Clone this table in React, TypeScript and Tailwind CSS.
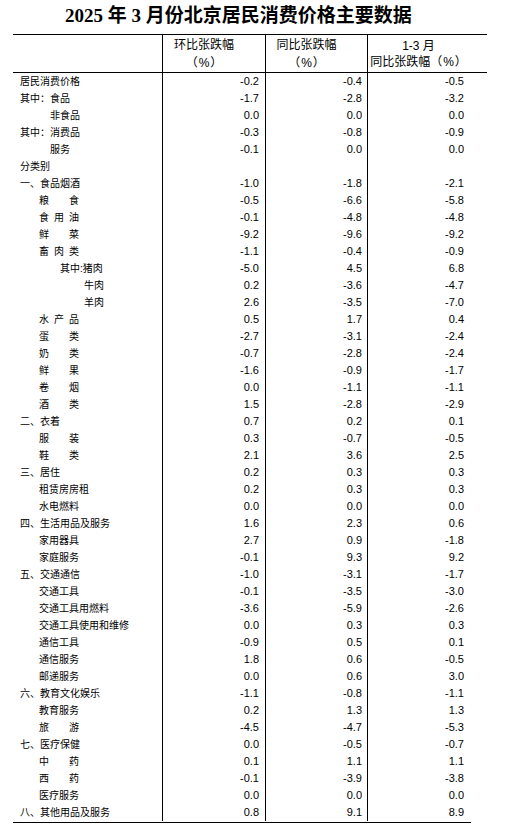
import React from 'react'

type Level = 0 | 1 | 2 | 3 | 4

interface Row {
  label: string
  level: Level
  spread?: boolean
  values?: [string, string, string]
}

const rows: Row[] = [
  { label: '居民消费价格', level: 0, values: ['-0.2', '-0.4', '-0.5'] },
  { label: '其中：食品', level: 0, values: ['-1.7', '-2.8', '-3.2'] },
  { label: '非食品', level: 2, values: ['0.0', '0.0', '0.0'] },
  { label: '其中：消费品', level: 0, values: ['-0.3', '-0.8', '-0.9'] },
  { label: '服务', level: 2, values: ['-0.1', '0.0', '0.0'] },
  { label: '分类别', level: 0 },
  { label: '一、食品烟酒', level: 0, values: ['-1.0', '-1.8', '-2.1'] },
  { label: '粮食', level: 1, spread: true, values: ['-0.5', '-6.6', '-5.8'] },
  { label: '食用油', level: 1, spread: true, values: ['-0.1', '-4.8', '-4.8'] },
  { label: '鲜菜', level: 1, spread: true, values: ['-9.2', '-9.6', '-9.2'] },
  { label: '畜肉类', level: 1, spread: true, values: ['-1.1', '-0.4', '-0.9'] },
  { label: '其中:猪肉', level: 3, values: ['-5.0', '4.5', '6.8'] },
  { label: '牛肉', level: 4, values: ['0.2', '-3.6', '-4.7'] },
  { label: '羊肉', level: 4, values: ['2.6', '-3.5', '-7.0'] },
  { label: '水产品', level: 1, spread: true, values: ['0.5', '1.7', '0.4'] },
  { label: '蛋类', level: 1, spread: true, values: ['-2.7', '-3.1', '-2.4'] },
  { label: '奶类', level: 1, spread: true, values: ['-0.7', '-2.8', '-2.4'] },
  { label: '鲜果', level: 1, spread: true, values: ['-1.6', '-0.9', '-1.7'] },
  { label: '卷烟', level: 1, spread: true, values: ['0.0', '-1.1', '-1.1'] },
  { label: '酒类', level: 1, spread: true, values: ['1.5', '-2.8', '-2.9'] },
  { label: '二、衣着', level: 0, values: ['0.7', '0.2', '0.1'] },
  { label: '服装', level: 1, spread: true, values: ['0.3', '-0.7', '-0.5'] },
  { label: '鞋类', level: 1, spread: true, values: ['2.1', '3.6', '2.5'] },
  { label: '三、居住', level: 0, values: ['0.2', '0.3', '0.3'] },
  { label: '租赁房房租', level: 1, values: ['0.2', '0.3', '0.3'] },
  { label: '水电燃料', level: 1, values: ['0.0', '0.0', '0.0'] },
  { label: '四、生活用品及服务', level: 0, values: ['1.6', '2.3', '0.6'] },
  { label: '家用器具', level: 1, values: ['2.7', '0.9', '-1.8'] },
  { label: '家庭服务', level: 1, values: ['-0.1', '9.3', '9.2'] },
  { label: '五、交通通信', level: 0, values: ['-1.0', '-3.1', '-1.7'] },
  { label: '交通工具', level: 1, values: ['-0.1', '-3.5', '-3.0'] },
  { label: '交通工具用燃料', level: 1, values: ['-3.6', '-5.9', '-2.6'] },
  { label: '交通工具使用和维修', level: 1, values: ['0.0', '0.3', '0.3'] },
  { label: '通信工具', level: 1, values: ['-0.9', '0.5', '0.1'] },
  { label: '通信服务', level: 1, values: ['1.8', '0.6', '-0.5'] },
  { label: '邮递服务', level: 1, values: ['0.0', '0.6', '3.0'] },
  { label: '六、教育文化娱乐', level: 0, values: ['-1.1', '-0.8', '-1.1'] },
  { label: '教育服务', level: 1, values: ['0.2', '1.3', '1.3'] },
  { label: '旅游', level: 1, spread: true, values: ['-4.5', '-4.7', '-5.3'] },
  { label: '七、医疗保健', level: 0, values: ['0.0', '-0.5', '-0.7'] },
  { label: '中药', level: 1, spread: true, values: ['0.1', '1.1', '1.1'] },
  { label: '西药', level: 1, spread: true, values: ['-0.1', '-3.9', '-3.8'] },
  { label: '医疗服务', level: 1, values: ['0.0', '0.0', '0.0'] },
  { label: '八、其他用品及服务', level: 0, values: ['0.8', '9.1', '8.9'] },
]

const indent: Record<Level, string> = {
  0: 'pl-[7px]',
  1: 'pl-[26px]',
  2: 'pl-[37px]',
  3: 'pl-[47px]',
  4: 'pl-[71px]',
}

function Label({ row }: { row: Row }) {
  if (row.spread) {
    return (
      <div className="flex w-[40px] justify-between">
        {row.label.split('').map((ch, i) => (
          <span key={i}>{ch}</span>
        ))}
      </div>
    )
  }
  return <span className="whitespace-nowrap">{row.label}</span>
}

function DataRow({ row }: { row: Row }) {
  const v = row.values ?? ['', '', '']
  return (
    <div className="flex h-[17px] items-center">
      <div
        className={`flex h-full w-[150px] items-center border-r border-black text-[10px] ${indent[row.level]}`}
      >
        <Label row={row} />
      </div>
      <div className="flex h-full w-[103px] items-center justify-end border-r border-black pr-[6px]">
        {v[0]}
      </div>
      <div className="flex h-full w-[102px] items-center justify-end border-r border-black pr-[5px]">
        {v[1]}
      </div>
      <div className="flex h-full w-[103px] items-center justify-end pr-[7px]">{v[2]}</div>
    </div>
  )
}

// full-width parens get trimmed to half width, so give them a full cell each
function Pct() {
  return (
    <span className="inline-flex items-center">
      <span className="inline-block w-[12px] text-right">（</span>
      <span className="px-[1px]">%</span>
      <span className="inline-block w-[12px] text-left">）</span>
    </span>
  )
}

export default function App() {
  return (
    <div className="min-h-[840px] bg-white pt-[6px] text-black">
      <div className="w-[500px] pr-[36px] pl-[13px]">
        <h1 className="h-[20px] text-center font-['Liberation_Serif','Noto_Sans_CJK_SC',serif] text-[19px] leading-[20px] font-bold">
          2025 年 3 月份北京居民消费价格主要数据
        </h1>
      </div>

      <div className="mt-[8px] ml-[13px] font-['Liberation_Sans','Noto_Sans_CJK_SC',sans-serif] text-[11px]">
        <div className="flex h-[39px] w-[474px] border-y border-black text-[12px]">
          <div className="w-[150px] border-r border-black" />
          <div className="flex w-[103px] flex-col items-center justify-center border-r border-black pr-[20px] leading-[18px]">
            <span>环比张跌幅</span>
            <Pct />
          </div>
          <div className="flex w-[102px] flex-col items-center justify-center border-r border-black pr-[20px] leading-[18px]">
            <span>同比张跌幅</span>
            <Pct />
          </div>
          <div className="flex w-[119px] flex-col items-center justify-center pr-[18px] leading-[16px]">
            <span>1-3 月</span>
            <span className="inline-flex items-center whitespace-nowrap">
              同比张跌幅
              <Pct />
            </span>
          </div>
        </div>

        <div className="w-[458px] border-b border-black pb-[1px]">
          {rows.map((row) => (
            <DataRow key={row.label} row={row} />
          ))}
        </div>
      </div>
    </div>
  )
}
